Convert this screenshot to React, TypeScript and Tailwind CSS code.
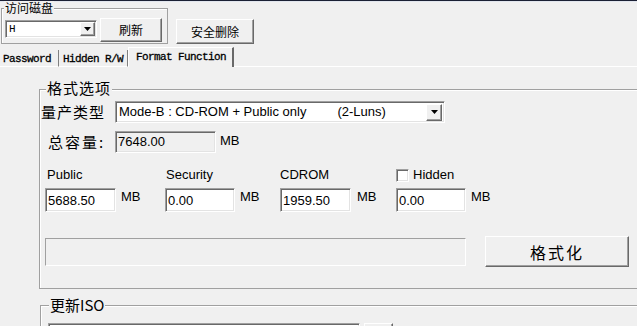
import React from "react";

const raised =
  "border border-t-white border-l-white border-b-[#696969] border-r-[#696969] shadow-[inset_-1px_-1px_0_#a0a0a0] bg-[#f0f0f0]";
const sunken =
  "border border-t-[#a0a0a0] border-l-[#a0a0a0] border-b-white border-r-white shadow-[inset_1px_1px_0_#696969,inset_-1px_-1px_0_#e3e3e3]";
const cjk = "font-['Noto_Sans_CJK_SC',sans-serif]";
const mono = "font-['Liberation_Mono',monospace]";

function Arrow() {
  return (
    <svg width="7" height="4" viewBox="0 0 7 4">
      <path d="M0 0h7L3.5 4z" fill="#000" />
    </svg>
  );
}

function DropBtn({ className }: { className: string }) {
  return (
    <div className={`${raised} flex items-center justify-center ${className}`}>
      <Arrow />
    </div>
  );
}

function Field({ value, w, ro }: { value: string; w: string; ro?: boolean }) {
  return (
    <div
      className={`${sunken} ${w} h-[24px] ${ro ? "bg-[#f0f0f0]" : "bg-white"} flex items-center pl-[2px] pt-[2px] text-[13px]`}
    >
      {value}
    </div>
  );
}

function Group({
  label,
  className,
  labelClass,
  children,
}: {
  label: string;
  className: string;
  labelClass: string;
  children?: React.ReactNode;
}) {
  return (
    <div className={`relative border border-[#a0a0a0] shadow-[inset_1px_1px_0_#fff] ${className}`}>
      <span className={`absolute bg-[#f0f0f0] ${labelClass}`}>{label}</span>
      {children}
    </div>
  );
}

export default function App() {
  return (
    <div className="w-[637px] h-[326px] overflow-hidden bg-[#f0f0f0] text-black font-['Liberation_Sans',sans-serif]">
      <div className="h-px bg-[#1b2034]" />
      <div className="h-px bg-[#e2e6ee]" />

      {/* top row */}
      <div className="flex items-start">
        <Group
          label="访问磁盘"
          className="ml-px mt-[6px] w-[167px] h-[36px] shrink-0"
          labelClass={`left-[2px] -top-[8px] px-[1px] text-[12px] leading-[14px] ${cjk}`}
        >
          <div className="flex items-start pl-[3px] pt-[9px]">
            <div className={`${sunken} bg-white w-[92px] h-[18px] mt-[2px] flex items-center justify-between pl-[3px] pr-px`}>
              <span className={`${mono} text-[11px] leading-none`}>H</span>
              <DropBtn className="w-[15px] h-[14px]" />
            </div>
            <button className={`${raised} ml-[3px] w-[62px] h-[24px] text-[12px] ${cjk} leading-none`}>刷新</button>
          </div>
        </Group>
        <button className={`${raised} ml-[8px] mt-[17px] w-[78px] h-[25px] text-[12px] ${cjk} leading-none`}>
          安全删除
        </button>
      </div>

      {/* tabs */}
      <div className={`mt-[3px] flex items-end h-[20px] ${mono} text-[11px] tracking-[-0.6px] [-webkit-text-stroke:0.3px_black]`}>
        <div className="h-[17px] w-[59px] border-r border-r-[#808080] border-b border-b-white pl-[3px] leading-[14px] pt-[2px]">
          Password
        </div>
        <div className="h-[17px] w-[69px] border-b border-b-white pl-[4px] leading-[14px] pt-[2px] border-r border-r-[#808080]">
          Hidden R/W
        </div>
        <div className="h-[20px] w-[106px] border-l border-l-white border-t border-t-white border-r-2 border-r-[#696969] pl-[7px] leading-[14px] pt-[2px]">
          Format Function
        </div>
        <div className="flex-1 h-px bg-white" />
      </div>

      {/* 格式选项 */}
      <Group
        label="格式选项"
        className="ml-[39px] mt-[22px] w-[620px] h-[200px]"
        labelClass={`left-[6px] -top-[12px] px-px text-[15px] leading-[20px] tracking-[1px] ${cjk}`}
      >
        <div className="mt-[11px] flex items-center">
          <span className={`ml-[1px] w-[74px] text-[15px] leading-[20px] tracking-[1px] ${cjk}`}>量产类型</span>
          <div className={`${sunken} bg-white w-[330px] h-[22px] flex items-center justify-between pl-[3px] pr-[2px] text-[13px]`}>
            <span className="whitespace-pre">
              Mode-B : CD-ROM + Public only<span className="ml-[31px]">(2-Luns)</span>
            </span>
            <DropBtn className="w-[16px] h-[17px]" />
          </div>
        </div>
        <div className="mt-[8px] flex items-center">
          <span className={`ml-[8px] w-[67px] text-[15px] leading-[20px] tracking-[2px] ${cjk}`}>总容量:</span>
          <div className={`${sunken} bg-[#f0f0f0] w-[101px] h-[22px] flex items-center pl-[2px] text-[13px]`}>7648.00</div>
          <span className="ml-[4px] text-[13px] -mt-[3px]">MB</span>
        </div>

        <div className="mt-[14px] flex text-[13px] leading-[16px]">
          <div className="ml-[5px] w-[120px] shrink-0">
            <div className="h-[16px] pl-[2px]">Public</div>
            <div className="mt-[5px] flex items-start">
              <Field value="5688.50" w="w-[71px]" />
              <span className="ml-[5px] mt-px">MB</span>
            </div>
          </div>
          <div className="w-[115px] shrink-0">
            <div className="h-[16px] pl-[1px]">Security</div>
            <div className="mt-[5px] flex items-start">
              <Field value="0.00" w="w-[70px]" />
              <span className="ml-[5px] mt-px">MB</span>
            </div>
          </div>
          <div className="w-[116px] shrink-0">
            <div className="h-[16px]">CDROM</div>
            <div className="mt-[5px] flex items-start">
              <Field value="1959.50" w="w-[71px]" />
              <span className="ml-[6px] mt-px">MB</span>
            </div>
          </div>
          <div className="w-[120px] shrink-0">
            <div className="h-[16px] flex items-center">
              <span className={`${sunken} w-[13px] h-[13px] bg-white`} />
              <span className="ml-[4px]">Hidden</span>
            </div>
            <div className="mt-[5px] flex items-start">
              <Field value="0.00" w="w-[70px]" />
              <span className="ml-[5px] mt-px">MB</span>
            </div>
          </div>
        </div>

        <div className="mt-[24px] flex items-start">
          <div className="ml-[5px] mt-[2px] w-[421px] h-[28px] border border-t-[#a0a0a0] border-l-[#a0a0a0] border-b-white border-r-white" />
          <button className={`${raised} ml-[19px] w-[144px] h-[31px] text-[16px] ${cjk} leading-none tracking-[2px]`}>
            格式化
          </button>
        </div>
      </Group>

      {/* 更新ISO */}
      <Group
        label="更新ISO"
        className="ml-[40px] mt-[16px] w-[620px] h-[60px]"
        labelClass={`left-[8px] -top-[11px] px-px text-[15px] leading-[20px] ${cjk}`}
      >
        <div className="mt-[17px] flex items-start">
          <div className={`${sunken} bg-white ml-[7px] w-[312px] h-[22px]`} />
          <button className={`${raised} ml-[4px] w-[29px] h-[22px]`} />
        </div>
      </Group>
    </div>
  );
}
